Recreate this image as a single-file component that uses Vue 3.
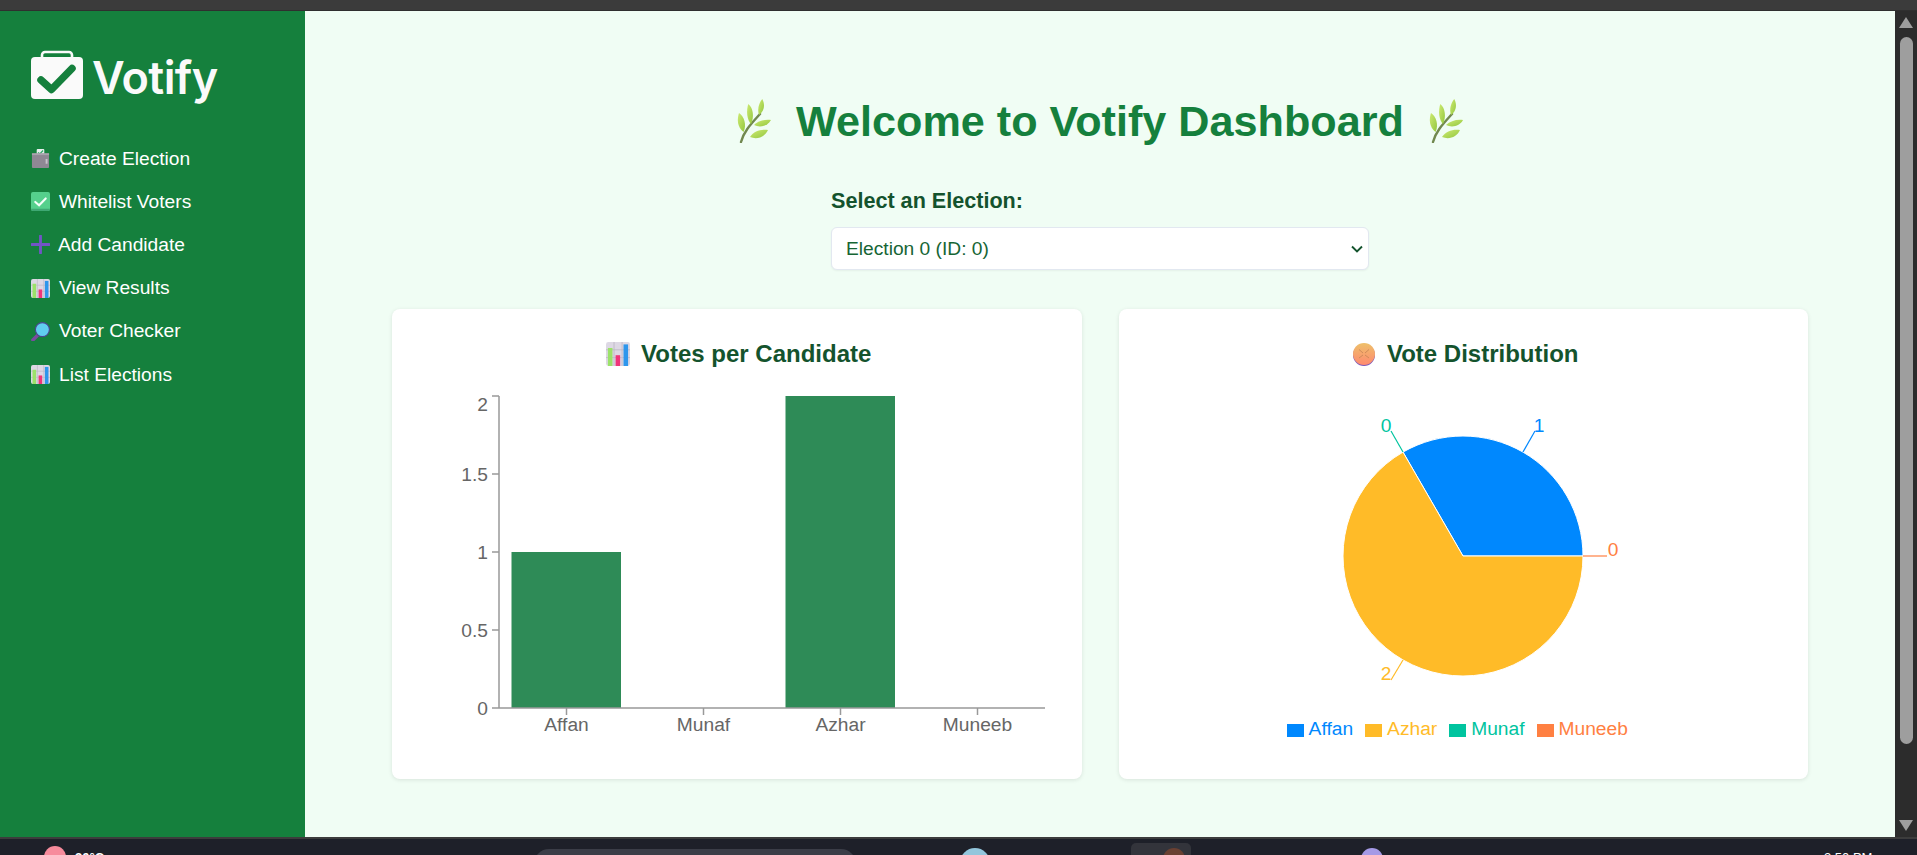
<script setup>
const navItems = [
  { label: 'Create Election', icon: 'ballot' },
  { label: 'Whitelist Voters', icon: 'check' },
  { label: 'Add Candidate', icon: 'plus' },
  { label: 'View Results', icon: 'chart' },
  { label: 'Voter Checker', icon: 'search' },
  { label: 'List Elections', icon: 'chart' },
]

const herbLeaves = [
  'M8.5 33C2 28 2 20 4 14c5 3 8 12 4.5 19z',
  'M16 25c-4-4-5-13-2.7-20 5 4 6 13 2.7 20z',
  'M24 16c-2-6 0-12 3.3-16 3 6 2 12-3.3 16z',
  'M19 26c4-4 11-6 17-5-3 6-11 8-17 5z',
  'M15 38c4-6 11-8 18-7-3 7-11 10-18 7z',
]

const votes = [
  { name: 'Affan', value: 1 },
  { name: 'Munaf', value: 0 },
  { name: 'Azhar', value: 2 },
  { name: 'Muneeb', value: 0 },
]

const yTicks = [
  { label: '2', y: 17, textY: 25 },
  { label: '1.5', y: 95, textY: 95 },
  { label: '1', y: 173, textY: 173 },
  { label: '0.5', y: 251, textY: 251 },
  { label: '0', y: 329, textY: 329 },
]

const band = 137
const axisLeft = 82
const axisBottom = 329
const unit = 156

const pieLabels = [
  { text: '1', color: '#0088fe', line: '60,-104 72,-125', x: 76, y: -131 },
  { text: '0', color: '#00c49f', line: '-60,-104 -72,-125', x: -77, y: -131 },
  { text: '0', color: '#ff8042', line: '120,0 144,0', x: 150, y: -7 },
  { text: '2', color: '#ffbb28', line: '-60,104 -72,124', x: -77, y: 117 },
]

const legend = [
  { name: 'Affan', color: '#0088fe' },
  { name: 'Azhar', color: '#ffbb28' },
  { name: 'Munaf', color: '#00c49f' },
  { name: 'Muneeb', color: '#ff8042' },
]
</script>

<template>
  <div class="screen">
    <div class="window-top"></div>

    <div class="window-body">
      <aside class="sidebar">
        <div class="logo">
          <svg class="logo-mark" width="52" height="50" viewBox="0 0 52 50">
            <path d="M11 9V5a3 3 0 0 1 3-3h24a3 3 0 0 1 3 3v4" fill="none" stroke="#fafafa" stroke-width="2.6" />
            <rect x="0" y="7" width="52" height="42" rx="4" fill="#fafafa" />
            <path d="M10 30 20.5 39.5 41 18.5" fill="none" stroke="#15803d" stroke-width="7.5" stroke-linejoin="round" stroke-linecap="round" />
          </svg>
          <span class="logo-text">Votify</span>
        </div>

        <nav class="nav">
          <a v-for="item in navItems" :key="item.label" class="nav-item" :class="{ tight: item.icon === 'plus' }">
            <svg class="nav-icon" viewBox="0 0 20 20">
              <template v-if="item.icon === 'ballot'">
                <rect x="6" y="0" width="8" height="7" rx="1" fill="#e8f0ee" />
                <path d="M7.5 3.5 9.3 5.2 12.7 1.6" fill="none" stroke="#2fa866" stroke-width="1.3" />
                <path d="M1 5h18v14a1 1 0 0 1-1 1H2a1 1 0 0 1-1-1z" fill="#8f8894" />
                <rect x="1" y="4.4" width="18" height="2" fill="#a9a3ad" />
                <rect x="15.4" y="10.5" width="2" height="5" fill="#c8c3cc" />
              </template>
              <template v-else-if="item.icon === 'check'">
                <rect x="0" y="0" width="20" height="20" rx="2" fill="#55d08c" />
                <path d="M0 17.5V18a2 2 0 0 0 2 2h16a2 2 0 0 0 2-2v-.5z" fill="#3fa873" />
                <path d="M4.5 10.5 8.5 14 15.5 6.8" fill="none" stroke="#f4fff9" stroke-width="2.2" stroke-linecap="round" />
              </template>
              <template v-else-if="item.icon === 'plus'">
                <path d="M10 1v18M1 10h18" stroke="#7254c6" stroke-width="3" stroke-linecap="round" />
              </template>
              <template v-else-if="item.icon === 'chart'">
                <rect x="0" y="0" width="20" height="20" rx="2" fill="#ddd8e4" />
                <path d="M6.7 0v20M13.4 0v20M0 6.5h20M0 13h20" stroke="#bdb8c6" stroke-width=".7" />
                <rect x="1.6" y="5" width="3.8" height="15" fill="#9ce26a" />
                <rect x="8" y="11" width="3.8" height="9" fill="#f0357a" />
                <rect x="14.6" y="2" width="3.8" height="18" fill="#2e96ec" />
              </template>
              <template v-else>
                <path d="M7 14 2 19" stroke="#7a4aa0" stroke-width="3.6" stroke-linecap="round" />
                <circle cx="12" cy="8" r="7.4" fill="#60cdf0" stroke="#4a478f" stroke-width="1.2" />
              </template>
            </svg>
            <span>{{ item.label }}</span>
          </a>
        </nav>
      </aside>

      <main class="main">
        <h1 class="page-title">
          <svg class="herb" viewBox="0 0 36 44">
            <defs>
              <linearGradient id="leaf" x1="0" y1="0" x2="1" y2="1">
                <stop offset="0" stop-color="#cdea72" />
                <stop offset="1" stop-color="#93c73e" />
              </linearGradient>
            </defs>
            <path d="M6 43C9 32 16 25 25 15" fill="none" stroke="#71884f" stroke-width="2.4" stroke-linecap="round" />
            <path v-for="d in herbLeaves" :key="d" :d="d" fill="url(#leaf)" />
          </svg>
          <span>Welcome to Votify Dashboard</span>
          <svg class="herb herb-end" viewBox="0 0 36 44">
            <path d="M6 43C9 32 16 25 25 15" fill="none" stroke="#71884f" stroke-width="2.4" stroke-linecap="round" />
            <path v-for="d in herbLeaves" :key="d" :d="d" fill="url(#leaf)" />
          </svg>
        </h1>

        <div class="picker">
          <label class="picker-label" for="election">Select an Election:</label>
          <div class="picker-field">
            <select id="election" class="picker-select">
              <option>Election 0 (ID: 0)</option>
            </select>
            <svg class="picker-arrow" width="12" height="8" viewBox="0 0 12 8">
              <path d="M1 1.5 6 6.5 11 1.5" fill="none" stroke="#14532d" stroke-width="1.9" />
            </svg>
          </div>
        </div>

        <section class="cards">
          <div class="card">
            <h3 class="card-title">
              <svg class="title-icon" viewBox="0 0 20 20">
                <rect x="0" y="0" width="20" height="20" rx="2" fill="#ddd8e4" />
                <path d="M6.7 0v20M13.4 0v20M0 6.5h20M0 13h20" stroke="#bdb8c6" stroke-width=".7" />
                <rect x="1.6" y="5" width="3.8" height="15" fill="#9ce26a" />
                <rect x="8" y="11" width="3.8" height="9" fill="#f0357a" />
                <rect x="14.6" y="2" width="3.8" height="18" fill="#2e96ec" />
              </svg>
              <span>Votes per Candidate</span>
            </h3>
            <svg class="chart" width="640" height="368" viewBox="0 0 640 368">
              <rect
                v-for="(row, i) in votes"
                :key="row.name"
                :x="axisLeft + 12.5 + band * i"
                :y="axisBottom - row.value * unit"
                width="109.5"
                :height="row.value * unit"
                fill="#2e8b57"
              />
              <line :x1="axisLeft" y1="17" :x2="axisLeft" :y2="axisBottom" class="axis" />
              <line :x1="axisLeft" :y1="axisBottom" x2="628" :y2="axisBottom" class="axis" />
              <g v-for="tick in yTicks" :key="tick.label">
                <line x1="75" :y1="tick.y" :x2="axisLeft" :y2="tick.y" class="axis" />
                <text x="71" :y="tick.textY + 7" text-anchor="end" class="tick">{{ tick.label }}</text>
              </g>
              <g v-for="(row, i) in votes" :key="row.name + '-tick'">
                <line :x1="axisLeft + 67.5 + band * i" :y1="axisBottom" :x2="axisLeft + 67.5 + band * i" :y2="axisBottom + 7" class="axis" />
                <text :x="axisLeft + 67.5 + band * i" y="352" text-anchor="middle" class="tick">{{ row.name }}</text>
              </g>
            </svg>
          </div>

          <div class="card">
            <h3 class="card-title">
              <svg class="title-icon" viewBox="0 0 24 24">
                <defs>
                  <linearGradient id="ball" x1="0" y1="0" x2="0" y2="1">
                    <stop offset="0" stop-color="#eec06a" />
                    <stop offset="1" stop-color="#ff8a70" />
                  </linearGradient>
                </defs>
                <ellipse cx="12" cy="13" rx="11" ry="11" fill="#7a57b8" />
                <ellipse cx="12" cy="12" rx="11" ry="11" fill="url(#ball)" />
                <path d="M7 7.5 11 11M17 7.5 13 11M7 16l4-3M17 16l-4-3" stroke="#d08a5a" stroke-width="1" />
              </svg>
              <span>Vote Distribution</span>
            </h3>
            <svg class="chart" width="640" height="335" viewBox="0 0 640 335">
              <g transform="translate(320 177)">
                <path d="M0 0H120A120 120 0 0 0 -60 -103.9Z" fill="#0088fe" stroke="#fff" />
                <path d="M0 0L-60 -103.9A120 120 0 1 0 120 0Z" fill="#ffbb28" stroke="#fff" />
                <g v-for="item in pieLabels" :key="item.color">
                  <polyline :points="item.line" fill="none" :stroke="item.color" stroke-width="1.2" />
                  <text :x="item.x" :y="item.y + 7" text-anchor="middle" class="pie-label" :fill="item.color">{{ item.text }}</text>
                </g>
              </g>
            </svg>
            <ul class="legend">
              <li v-for="item in legend" :key="item.name" class="legend-item" :style="{ color: item.color }">
                <span class="legend-swatch"></span>
                <span>{{ item.name }}</span>
              </li>
            </ul>
          </div>
        </section>
      </main>

      <div class="scrollbar">
        <span class="arrow arrow-up"></span>
        <span class="thumb"></span>
        <span class="arrow arrow-down"></span>
      </div>
    </div>

    <footer class="taskbar">
      <span class="tray-dot tray-pink"></span>
      <span class="tray-text">30°C</span>
      <span class="tray-search"></span>
      <span class="tray-dot tray-blue"></span>
      <span class="tray-app"><span class="tray-dot tray-brown"></span></span>
      <span class="tray-dot tray-purple"></span>
      <span class="tray-clock">3:50 PM</span>
    </footer>
  </div>
</template>

<style>
html,
body {
  margin: 0;
  overflow: hidden;
}
</style>

<style scoped>
.screen {
  display: flex;
  flex-direction: column;
  width: 1917px;
  height: 855px;
  overflow: hidden;
  font-family: 'Liberation Sans', Arial, sans-serif;
}

.window-top {
  flex: none;
  height: 11px;
  background: #3b3b3b;
  border-bottom: 1px solid #2f2f2f;
  box-sizing: border-box;
}

.window-body {
  display: flex;
  flex: none;
  height: 826px;
}

.sidebar {
  flex: none;
  box-sizing: border-box;
  width: 305px;
  padding: 39px 30px 0 31px;
  background: #15803d;
  color: #fff;
}

.logo {
  display: flex;
  align-items: center;
  gap: 9px;
  height: 50px;
}

.logo-text {
  padding-top: 5px;
  font-family: Inter, sans-serif;
  font-size: 45px;
  font-weight: 600;
  letter-spacing: -0.6px;
  line-height: 50px;
  color: #fafafa;
}

.nav {
  display: flex;
  flex-direction: column;
  margin-top: 37px;
}

.nav-item {
  display: flex;
  align-items: center;
  gap: 9px;
  height: 43.2px;
  font-size: 19.2px;
}

.nav-item.tight {
  gap: 8px;
}

.nav-icon {
  flex: none;
  width: 19px;
  height: 19px;
}

.main {
  flex: 1;
  box-sizing: border-box;
  padding: 0 87px;
  background: #f0fdf4;
}

.page-title {
  display: flex;
  justify-content: center;
  align-items: center;
  gap: 24px;
  margin: 0;
  padding-top: 86px;
  height: 48px;
  box-sizing: content-box;
  font-size: 43.2px;
  line-height: 48px;
  font-weight: 700;
  color: #15803d;
}

.herb {
  flex: none;
  width: 38px;
  height: 44px;
}

.herb-end {
  margin-left: -2px;
  margin-right: 2px;
}

.picker {
  width: 538px;
  margin: 44px auto 0;
}

.picker-label {
  display: block;
  font-size: 21.6px;
  line-height: 24px;
  font-weight: 700;
  color: #14532d;
}

.picker-field {
  position: relative;
  margin-top: 14px;
}

.picker-select {
  display: block;
  box-sizing: border-box;
  width: 100%;
  height: 43px;
  padding: 0 14px;
  border: 1px solid #e2e8f0;
  border-radius: 6px;
  background: #fff;
  box-shadow: 0 1px 2px rgba(0, 0, 0, 0.05);
  color: #166534;
  font-family: inherit;
  font-size: 19.2px;
  appearance: none;
}

.picker-arrow {
  position: absolute;
  top: 18px;
  right: 6px;
  pointer-events: none;
}

.cards {
  display: grid;
  grid-template-columns: repeat(2, minmax(0, 1fr));
  gap: 37px;
  margin-top: 39px;
}

.card {
  box-sizing: border-box;
  height: 470px;
  padding-top: 32px;
  border-radius: 8px;
  background: #fff;
  box-shadow: 0 1px 4px rgba(0, 0, 0, 0.1);
}

.card-title {
  display: flex;
  justify-content: center;
  align-items: center;
  gap: 11px;
  margin: 0 0 12px;
  padding-left: 4px;
  height: 26px;
  font-size: 24px;
  line-height: 26px;
  font-weight: 700;
  color: #14532d;
}

.title-icon {
  flex: none;
  width: 24px;
  height: 24px;
}

.chart {
  display: block;
  margin: 0 auto;
}

.axis {
  stroke: #999;
  stroke-width: 1.5;
}

.tick {
  font-size: 19.2px;
  fill: #666;
}

.pie-label {
  font-size: 19.2px;
}

.legend {
  display: flex;
  justify-content: center;
  align-items: center;
  gap: 12px;
  height: 32px;
  margin: -1px 0 0;
  padding: 0 12px 0 0;
  list-style: none;
  font-size: 19.2px;
}

.legend-item {
  display: flex;
  align-items: center;
  gap: 5px;
}

.legend-swatch {
  width: 17px;
  height: 13px;
  margin-top: 2px;
  background: currentColor;
}

.scrollbar {
  display: flex;
  flex: none;
  flex-direction: column;
  align-items: center;
  box-sizing: border-box;
  width: 22px;
  padding-top: 6px;
  background: #2c2c2c;
}

.arrow {
  width: 0;
  height: 0;
  border-left: 7px solid transparent;
  border-right: 7px solid transparent;
}

.arrow-up {
  border-bottom: 11px solid #9e9e9e;
}

.arrow-down {
  margin-top: 76px;
  border-top: 11px solid #9e9e9e;
}

.thumb {
  width: 13px;
  height: 707px;
  margin-top: 9px;
  border-radius: 7px;
  background: #9e9e9e;
}

.taskbar {
  display: flex;
  flex: none;
  align-items: flex-start;
  box-sizing: border-box;
  height: 18px;
  border-top: 2px solid #3c3c3c;
  background: #1e2029;
  color: #fff;
  overflow: hidden;
}

.tray-dot {
  flex: none;
  width: 22px;
  height: 22px;
  border-radius: 50%;
}

.tray-pink {
  margin: 7px 0 0 44px;
  background: #f78b9c;
}

.tray-text {
  margin: 11px 0 0 9px;
  width: 40px;
  font-size: 13px;
  font-weight: 700;
}

.tray-search {
  width: 322px;
  height: 30px;
  margin: 10px 0 0 419px;
  border-radius: 15px;
  background: #3b3d47;
}

.tray-blue {
  margin: 9px 0 0 104px;
  width: 30px;
  height: 30px;
  background: #93c6dc;
}

.tray-app {
  display: flex;
  justify-content: flex-end;
  width: 60px;
  height: 40px;
  margin: 4px 0 0 141px;
  padding: 5px 6px 0 0;
  box-sizing: border-box;
  border-radius: 5px;
  background: #33343b;
}

.tray-brown {
  background: #6a4032;
}

.tray-purple {
  margin: 9px 0 0 170px;
  background: #a59ae6;
}

.tray-clock {
  margin: 11px 0 0 441px;
  font-size: 13px;
}
</style>
